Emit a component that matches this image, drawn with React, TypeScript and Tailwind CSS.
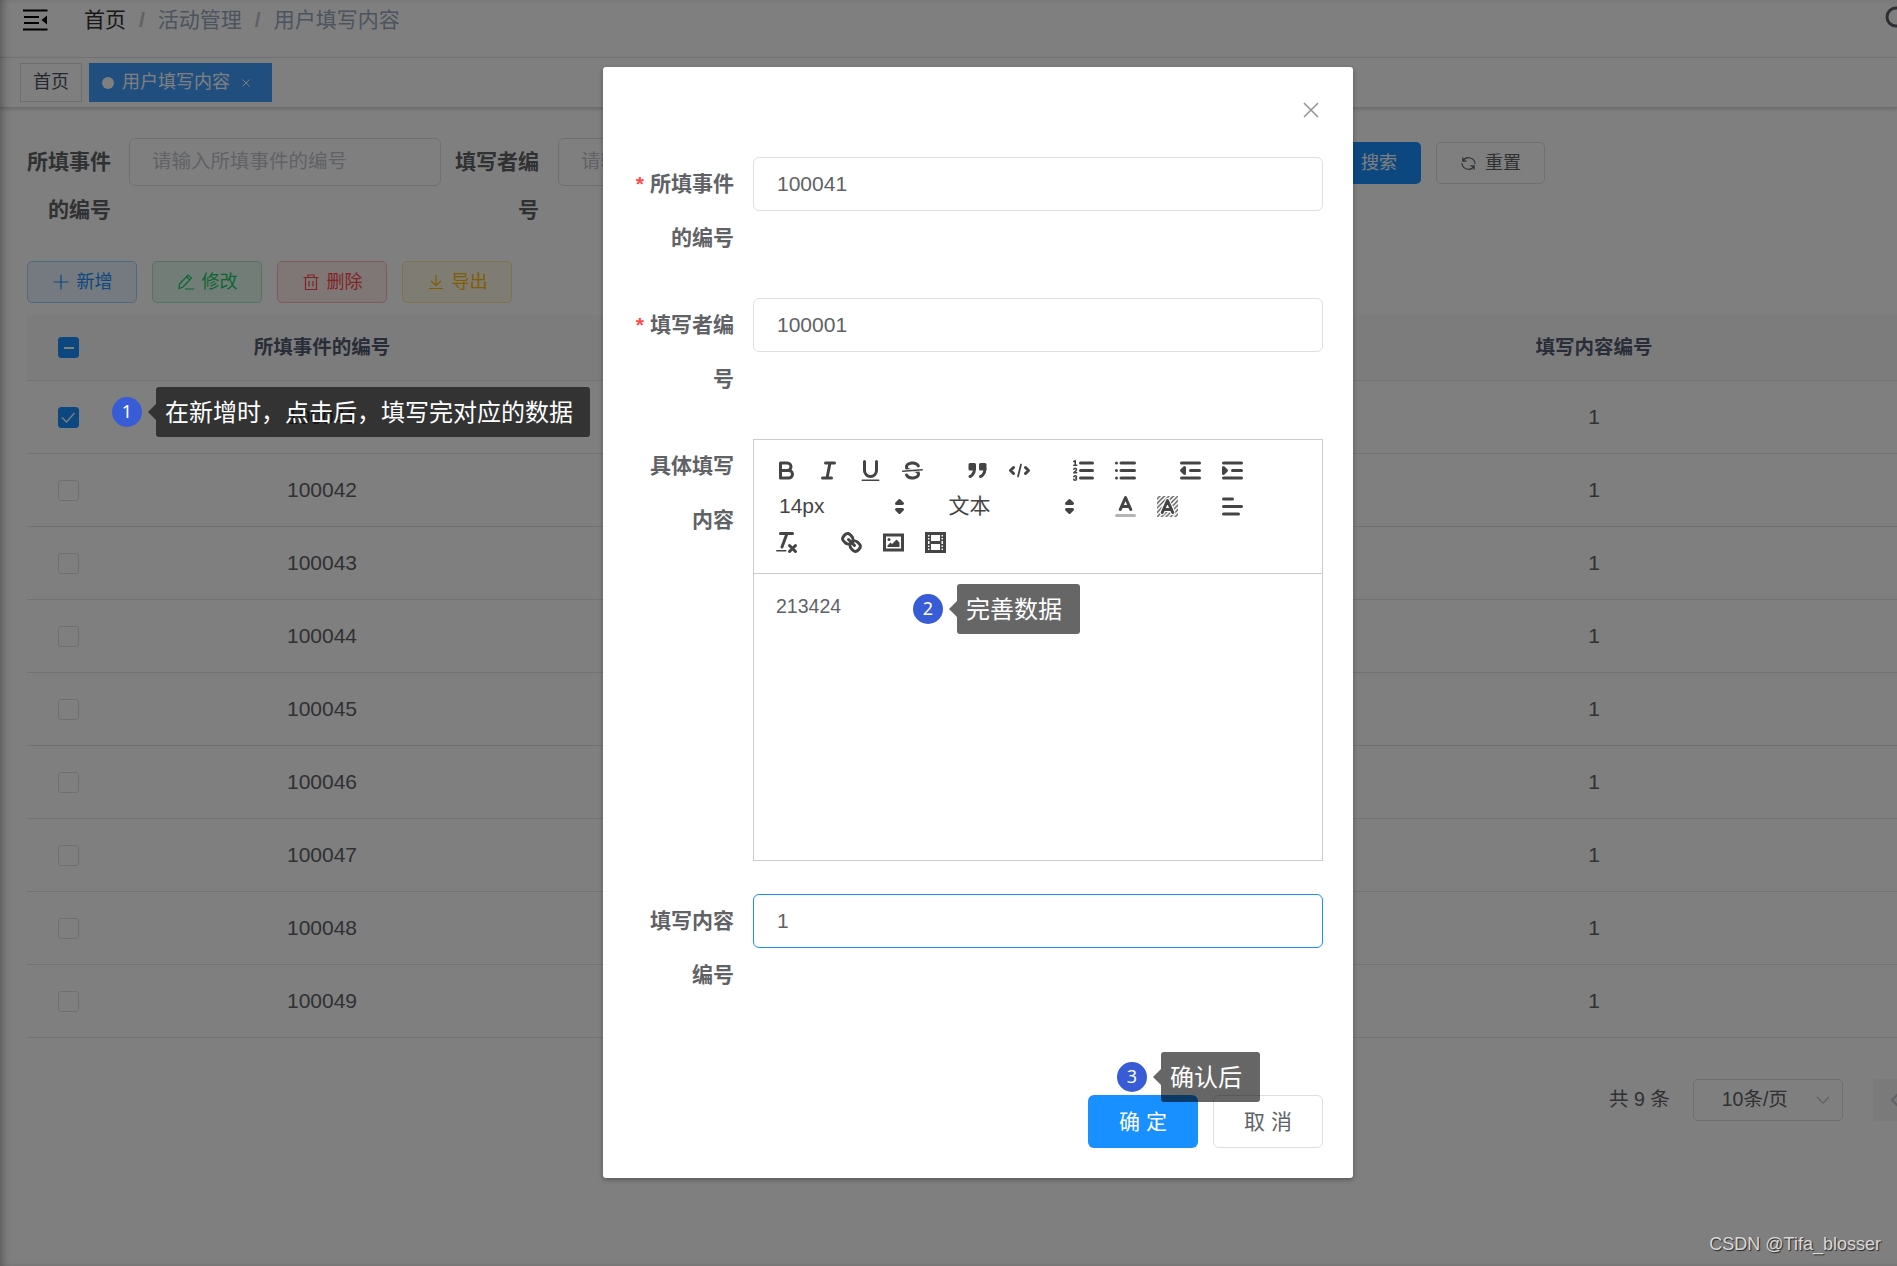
import type { ReactNode } from 'react';

type Tone = 'primary' | 'success' | 'danger' | 'warning';

const toneClasses: Record<Tone, string> = {
    primary: 'text-[#1890ff] bg-[#e8f4ff] border-[#a3d3ff]',
    success: 'text-[#13ce66] bg-[#e7faf0] border-[#a1ebc2]',
    danger: 'text-[#ff4949] bg-[#ffeded] border-[#ffb6b6]',
    warning: 'text-[#ffba00] bg-[#fff8e6] border-[#ffe399]',
};

const rows = ['100041', '100042', '100043', '100044', '100045', '100046', '100047', '100048', '100049'];

const LineIcon = ({ children, className = 'size-[18px]' }: { children: ReactNode; className?: string }) => (
    <svg viewBox="0 0 18 18" className={className} fill="none" stroke="currentColor" strokeWidth="1.2">
        {children}
    </svg>
);

const ActionButton = ({ tone, icon, label }: { tone: Tone; icon: ReactNode; label: string }) => (
    <button className={`flex h-[42px] w-[110px] items-center justify-center gap-[7px] rounded-[5px] border text-[18px] ${toneClasses[tone]}`}>
        <LineIcon>{icon}</LineIcon>
        {label}
    </button>
);

const Checkbox = ({ state }: { state?: 'checked' | 'partial' }) => (
    <span
        className={`flex size-[21px] items-center justify-center rounded-[3px] border ${
            state ? 'border-[#1890ff] bg-[#1890ff]' : 'border-[#dcdfe6] bg-white'
        }`}
    >
        {state === 'partial' && <span className="h-[2px] w-[10px] bg-white" />}
        {state === 'checked' && (
            <svg viewBox="0 0 21 21" className="size-[21px] shrink-0" fill="none" stroke="white" strokeWidth="1.3">
                <path d="M4 10.5 8.5 15 16.5 6" />
            </svg>
        )}
    </span>
);

/* Toolbar icons */
const Tool = ({ children }: { children: ReactNode }) => (
    <button className="flex h-9 w-[42px] items-center pl-[7px]">
        <svg
            viewBox="0 0 18 18"
            className="size-[27px]"
            fill="none"
            stroke="#444"
            strokeWidth="2"
            strokeLinecap="round"
            strokeLinejoin="round"
        >
            {children}
        </svg>
    </button>
);

const ToolGroup = ({ children }: { children: ReactNode }) => <div className="mr-[22.5px] flex">{children}</div>;

const Picker = ({ label }: { label: string }) => (
    <div className="flex h-9 w-[147px] items-center justify-between pl-[13px] text-[21px] text-[#444]">
        <span>{label}</span>
        <svg viewBox="0 0 18 18" className="size-[27px]" fill="#444" stroke="#444" strokeWidth="2" strokeLinejoin="round">
            <polygon points="7 11 9 13 11 11 7 11" />
            <polygon points="7 7 9 5 11 7 7 7" />
        </svg>
    </div>
);

const Toolbar = () => (
    <div className="flex h-[134px] flex-wrap content-start border-b border-[#ccc] px-3 pt-3">
        <ToolGroup>
            <Tool>
                <path d="M5,4H9.5A2.5,2.5,0,0,1,12,6.5v0A2.5,2.5,0,0,1,9.5,9H5Z" />
                <path d="M5,9h5.5A2.5,2.5,0,0,1,13,11.5v0A2.5,2.5,0,0,1,10.5,14H5Z" />
            </Tool>
            <Tool>
                <path d="M7 4h6M5 14h6M8 14 10 4" />
            </Tool>
            <Tool>
                <path d="M5,3V9a4.012,4.012,0,0,0,4,4H9a4.012,4.012,0,0,0,4-4V3" />
                <rect x="3" y="15" width="12" height="1" rx=".5" fill="#444" stroke="none" />
            </Tool>
            <Tool>
                <path d="M15.5 8.5 2.5 9.5" strokeWidth="1" />
                <g fill="#444" stroke="none">
                    <path d="M9.007,8C6.542,7.791,6,7.519,6,6.5,6,5.792,7.283,5,9,5c1.571,0,2.765.679,2.969,1.309a1,1,0,0,0,1.9-.617C13.356,4.106,11.354,3,9,3,6.2,3,4,4.538,4,6.5a3.2,3.2,0,0,0,.5,1.843Z" />
                    <path d="M8.984,10C11.457,10.208,12,10.479,12,11.5c0,0.708-1.283,1.5-3,1.5-1.571,0-2.765-.679-2.969-1.309a1,1,0,1,0-1.9.617C4.644,13.894,6.646,15,9,15c2.8,0,5-1.538,5-3.5a3.2,3.2,0,0,0-.5-1.843Z" />
                </g>
            </Tool>
        </ToolGroup>
        <ToolGroup>
            <Tool>
                <g fill="#444">
                    <rect x="4" y="5" width="3" height="3" />
                    <rect x="11" y="5" width="3" height="3" />
                    <path d="M7,8c0,4.031-3,5-3,5" />
                    <path d="M14,8c0,4.031-3,5-3,5" />
                </g>
            </Tool>
            <Tool>
                <path d="M5 7 3 9 5 11M13 7 15 9 13 11" />
                <path d="M10 5 8 13" strokeWidth="1.2" />
            </Tool>
        </ToolGroup>
        <ToolGroup>
            <Tool>
                <path d="M7 4h8M7 9h8M7 14h8" />
                <g strokeWidth="1">
                    <path d="M2.5 5.5h2M2.5 3 3.5 2.5v3" />
                    <path d="M4.5,10.5h-2c0-.234,1.85-1.076,1.85-2.234A0.959,0.959,0,0,0,2.5,8.156" />
                    <path d="M2.5,14.846a0.959,0.959,0,0,0,1.85-.109A0.7,0.7,0,0,0,3.75,14a0.688,0.688,0,0,0,.6-0.736,0.959,0.959,0,0,0-1.85-.109" />
                </g>
            </Tool>
            <Tool>
                <path d="M6 4h9M6 9h9M6 14h9M3 4v0M3 9v0M3 14v0" />
            </Tool>
        </ToolGroup>
        <div className="flex">
            <Tool>
                <path d="M3 4h12M3 14h12M9 9h6" />
                <polygon points="5 7 5 11 3 9" fill="#444" />
            </Tool>
            <Tool>
                <path d="M3 4h12M3 14h12M9 9h6" />
                <polygon points="3 7 3 11 5 9" fill="#444" />
            </Tool>
        </div>

        <div className="flex w-full">
            <ToolGroup>
                <Picker label="14px" />
            </ToolGroup>
            <ToolGroup>
                <Picker label="文本" />
            </ToolGroup>
            <ToolGroup>
                <Tool>
                    <path d="M3 15h12" opacity=".4" />
                    <path d="M5.5 11 9 3 12.5 11M6.38 9h5.25" />
                </Tool>
                <Tool>
                    <defs>
                        <pattern id="hatch" width="3" height="3" patternUnits="userSpaceOnUse">
                            <path d="M-1 1 1-1M0 3 3 0M2 4 4 2" strokeWidth="0.8" strokeLinecap="butt" />
                        </pattern>
                    </defs>
                    <rect x="2" y="2" width="14" height="14" fill="url(#hatch)" stroke="none" />
                    <path d="M5.5 13 9 5 12.5 13M6.38 11h5.25" stroke="white" strokeWidth="3.4" />
                    <path d="M5.5 13 9 5 12.5 13M6.38 11h5.25" />
                </Tool>
            </ToolGroup>
            <Tool>
                <path d="M3 4h6M3 9h12M3 14h10" />
            </Tool>
        </div>

        <ToolGroup>
            <Tool>
                <path d="M5 3h8" />
                <path d="M6 12 9.35 3" />
                <path d="M11 11 15 15M15 11 11 15" />
                <rect x="2" y="14" width="7" height="1" rx=".5" fill="#444" stroke="none" />
            </Tool>
        </ToolGroup>
        <ToolGroup>
            <Tool>
                <path d="M7 7 11 11" />
                <path d="M8.9,4.577a3.476,3.476,0,0,1,.36,4.679A3.476,3.476,0,0,1,4.577,8.9C3.185,7.5,2.035,6.4,4.217,4.217S7.5,3.185,8.9,4.577Z" />
                <path d="M13.423,9.1a3.476,3.476,0,0,0-4.679-.36,3.476,3.476,0,0,0,.36,4.679c1.392,1.392,2.5,2.542,4.679.36S14.815,10.5,13.423,9.1Z" />
            </Tool>
            <Tool>
                <rect x="3" y="4" width="12" height="10" strokeLinejoin="miter" />
                <circle cx="6" cy="7" r="1" fill="#444" stroke="none" />
                <polygon points="5 12 5 11 7 9 8 10 11 7 13 9 13 12 5 12" fill="#444" stroke="none" />
            </Tool>
            <Tool>
                <rect x="3" y="3" width="12" height="12" strokeLinejoin="miter" />
                <path
                    d="M5 3h1v12H5zM12 3h1v12h-1zM5 8h8v2H5zM3 5h3v1H3zM3 7h3v1H3zM3 10h3v1H3zM3 12h3v1H3zM12 5h3v1h-3zM12 7h3v1h-3zM12 10h3v1h-3zM12 12h3v1h-3z"
                    fill="#444"
                    stroke="none"
                />
            </Tool>
        </ToolGroup>
    </div>
);

const Field = ({ label, required, children }: { label: string[]; required?: boolean; children: ReactNode }) => (
    <div className="flex">
        <div className="mr-[19px] w-[101px] shrink-0 text-right text-[21px] leading-[54px] font-bold text-[#606266]">
            <div className="whitespace-nowrap">
                {required && <span className="mr-[6px] text-[#ff4949]">*</span>}
                {label[0]}
            </div>
            <div>{label[1]}</div>
        </div>
        {children}
    </div>
);

const TextBox = ({ value, focused }: { value: string; focused?: boolean }) => (
    <div
        className={`flex h-[54px] w-[570px] items-center rounded-[6px] border px-[23px] text-[21px] text-[#606266] ${
            focused ? 'border-[#1890ff]' : 'border-[#dcdfe6]'
        }`}
    >
        {value}
    </div>
);

const Callout = ({ step, text, className }: { step: number; text: string; className: string }) => (
    <div className={`absolute flex items-center ${className}`}>
        <span className="flex size-[30px] items-center justify-center rounded-full bg-[#385bd6] pb-[2px] font-['Noto_Sans'] text-[18px] text-white">
            {step}
        </span>
        <svg viewBox="0 0 8 16" className="ml-[6px] h-4 w-2" fill="#000" fillOpacity=".6">
            <path d="M8 0v16L0 8z" />
        </svg>
        <span className="h-[50px] grow rounded-[3px] bg-black/60 pl-[9px] text-[24px] leading-[51px] whitespace-nowrap text-white">{text}</span>
    </div>
);

const Dialog = () => (
    <div className="absolute top-[67px] left-[603px] flex h-[1111px] w-[750px] flex-col rounded-[3px] bg-white pr-[30px] pl-[30px] shadow-[0_2px_5px_rgba(0,0,0,0.3)]">
        <div className="flex h-[90px] items-center justify-end pr-1">
            <svg viewBox="0 0 16 16" className="mt-[-4px] size-4" fill="none" stroke="#909399" strokeWidth="1.5">
                <path d="M1 1 15 15M15 1 1 15" />
            </svg>
        </div>
        <div className="flex flex-col gap-[33px]">
            <Field label={['所填事件', '的编号']} required>
                <TextBox value="100041" />
            </Field>
            <Field label={['填写者编', '号']} required>
                <TextBox value="100001" />
            </Field>
            <Field label={['具体填写', '内容']}>
                <div className="h-[422px] w-[570px] border border-[#ccc]">
                    <Toolbar />
                    <p className="px-[22px] pt-[18px] text-[19.5px] leading-[28px] text-[#606266]">213424</p>
                </div>
            </Field>
            <Field label={['填写内容', '编号']}>
                <TextBox value="1" focused />
            </Field>
        </div>
        <div className="mt-auto mb-[30px] flex justify-end gap-[15px] text-[21px]">
            <button className="h-[53px] w-[110px] rounded-[6px] bg-[#1890ff] text-white">确 定</button>
            <button className="h-[53px] w-[110px] rounded-[6px] border border-[#dcdfe6] text-[#606266]">取 消</button>
        </div>
    </div>
);

const SearchLabel = ({ lines }: { lines: string[] }) => (
    <div className="w-[84px] text-right text-[21px] leading-[48px] font-bold text-[#606266]">
        {lines.map((line) => (
            <div key={line}>{line}</div>
        ))}
    </div>
);

const Header = () => (
    <>
        <header className="flex h-[58px] border-b border-[#f0f1f4]">
            <div className="flex h-10 items-center pl-[23px] text-[21px]">
                <svg viewBox="0 0 25 22" className="h-[22px] w-[25px]" fill="none" stroke="black" strokeWidth="2.2">
                    <path d="M0 1.5h24.5M1 8h15M1 14h15M0 20.5h24.5" />
                    <path d="M24 6.5v9l-5.5-4.5z" fill="black" stroke="none" />
                </svg>
                <span className="ml-9 text-[#303133]">首页</span>
                <span className="mx-[13px] font-bold text-[#c0c4cc]">/</span>
                <span className="text-[#97a8be]">活动管理</span>
                <span className="mx-[13px] font-bold text-[#c0c4cc]">/</span>
                <span className="text-[#97a8be]">用户填写内容</span>
            </div>
            <svg viewBox="0 0 24 24" className="mt-[6px] mr-[-12px] ml-auto size-6" fill="none" stroke="#5a5e66" strokeWidth="3">
                <circle cx="11" cy="11" r="9" />
                <path d="M18 18l5 5" />
            </svg>
        </header>
        <nav className="flex h-[50px] gap-[7px] border-b border-[#d8dce5] pt-[5px] pl-5 text-[18px] shadow-[0_1px_4px_rgba(0,0,0,0.2)]">
            <span className="flex h-[39px] w-[62px] items-center justify-center border border-[#d8dce5] text-[#495060]">首页</span>
            <span className="flex h-[39px] w-[183px] items-center bg-[#409eff] pl-[13px] text-white">
                <i className="mr-[8px] size-3 rounded-full bg-white" />
                用户填写内容
                <svg viewBox="0 0 8 8" className="ml-3 size-2" fill="none" stroke="white">
                    <path d="M.5.5l7 7M7.5.5l-7 7" />
                </svg>
            </span>
        </nav>
    </>
);

const DataTable = () => (
    <div className="mt-3 ml-[27px] text-[21px] text-[#606266]">
        <div className="grid h-[66px] grid-cols-[83px_424px_424px_424px_424px] items-center border-b border-[#dfe6ec] bg-[#f8f8f9] text-center text-[19.5px] font-bold text-[#515a6e]">
            <div className="flex justify-center">
                <Checkbox state="partial" />
            </div>
            <div>所填事件的编号</div>
            <div className="col-start-5">填写内容编号</div>
        </div>
        {rows.map((id, i) => (
            <div
                key={id}
                className="grid h-[73px] grid-cols-[83px_424px_424px_424px_424px] items-center border-b border-[#dfe6ec] text-center"
            >
                <div className="flex justify-center">
                    <Checkbox state={i === 0 ? 'checked' : undefined} />
                </div>
                <div>{id}</div>
                <div className="col-start-5">1</div>
            </div>
        ))}
    </div>
);

export default function App() {
    return (
        <div className="relative h-[1266px] w-[1897px] overflow-hidden bg-white font-['Liberation_Sans','Noto_Sans_CJK_SC',sans-serif]">
            <Header />

            {/* Search form */}
            <section className="flex h-[123px] items-start pt-[30px] pl-[27px]">
                <SearchLabel lines={['所填事件', '的编号']} />
                <div className="ml-[18px] flex h-12 w-[312px] items-center rounded-[6px] border border-[#dcdfe6] pl-[22px] text-[19.5px] text-[#c0c4cc]">
                    请输入所填事件的编号
                </div>
                <div className="ml-[14px]">
                    <SearchLabel lines={['填写者编', '号']} />
                </div>
                <div className="ml-[19px] flex h-12 w-[312px] items-center rounded-[6px] border border-[#dcdfe6] pl-[22px] text-[19.5px] text-[#c0c4cc]">
                    请输入填写者编号
                </div>
                <div className="mt-1 mr-[352px] ml-auto flex gap-[15px] text-[18px]">
                    <button className="h-[42px] w-[109px] rounded-[5px] bg-[#1890ff] pr-6 text-right text-white">搜索</button>
                    <button className="flex h-[42px] w-[109px] items-center justify-center gap-2 rounded-[5px] border border-[#dcdfe6] text-[#606266]">
                        <LineIcon className="size-[17px]">
                            <path d="M3 2.5v4h4M3.2 6A7 7 0 0 1 16 9.5M15 15.5v-4h-4M14.8 12A7 7 0 0 1 2 8.5" />
                        </LineIcon>
                        重置
                    </button>
                </div>
            </section>

            <section className="mt-[30px] flex gap-[15px] pl-[27px]">
                <ActionButton tone="primary" label="新增" icon={<path d="M9 1.5v15M1.5 9h15" />} />
                <ActionButton tone="success" label="修改" icon={<path d="M2.5 11 11 2l3.5 3L6 14l-4 1.5zM9.5 3.8 13 7M8 16h9" />} />
                <ActionButton tone="danger" label="删除" icon={<path d="M1.5 4.5h15M6 4.5V2h6v2.5M3.5 4.5v12h11v-12M7 8v5.5M11 8v5.5" />} />
                <ActionButton tone="warning" label="导出" icon={<path d="M9 2v10.5M4 8l5 4.5L14 8M2 15.5h14" />} />
            </section>

            <DataTable />

            <section className="mt-[41px] flex h-[42px] items-center pl-[1609px] text-[19.5px] whitespace-nowrap text-[#606266]">
                共 9 条
                <div className="ml-[23px] flex h-[42px] w-[150px] shrink-0 items-center justify-between rounded-[5px] border border-[#dcdfe6] pr-3 pl-7">
                    10条/页
                    <svg viewBox="0 0 14 8" className="h-2 w-[14px]" fill="none" stroke="#c0c4cc" strokeWidth="1.3">
                        <path d="M1 1l6 6 6-6" />
                    </svg>
                </div>
                <div className="ml-[30px] flex h-[42px] w-[45px] shrink-0 items-center justify-center rounded-[3px] bg-[#f4f4f5]">
                    <svg viewBox="0 0 8 14" className="h-[14px] w-2" fill="none" stroke="#c0c4cc" strokeWidth="2">
                        <path d="M7 1 1 7l6 6" />
                    </svg>
                </div>
            </section>

            {/* Dimmed page behind the dialog */}
            <div className="absolute inset-0 bg-black/50 shadow-[inset_6px_0_8px_-4px_rgba(0,0,0,0.35)]" />
            <Dialog />

            <Callout step={1} text="在新增时，点击后，填写完对应的数据" className="top-[387px] left-[112px] w-[478px]" />
            <Callout step={2} text="完善数据" className="top-[584px] left-[913px] w-[167px]" />
            <Callout step={3} text="确认后" className="top-[1052px] left-[1117px] w-[143px]" />

            <div className="absolute right-4 bottom-[8px] text-[18px] text-[#d8d8d8] [text-shadow:1px_1px_1px_rgba(0,0,0,0.7)]">CSDN @Tifa_blosser</div>
        </div>
    );
}
